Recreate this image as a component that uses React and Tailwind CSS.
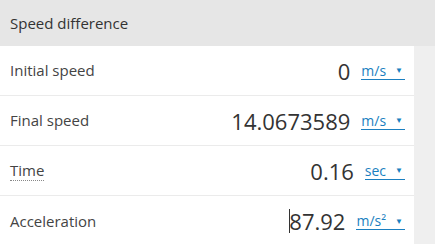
import React from 'react';

const rows = [
    { label: 'Initial speed', value: '0', unit: 'm/s' },
    { label: 'Final speed', value: '14.0673589', unit: 'm/s' },
    { label: 'Time', value: '0.16', unit: 'sec', dotted: true },
    { label: 'Acceleration', value: '87.92', unit: 'm/s²', caret: true },
];

const UnitLink = ({ unit }) => (
    <span className="flex items-center gap-[9px] border-b border-[#1a7fc0] text-[14px] leading-[17px] text-[#1a7fc0] pr-[2px]">
        <span>{unit}</span>
        <span className="text-[8px] leading-none">▼</span>
    </span>
);

export default function App() {
    return (
        <div className="w-[435px] h-[244px] overflow-hidden bg-[#efefef] font-['Open_Sans',sans-serif]">
            <div className="h-[46px] bg-[#e6e6e6] flex items-center px-[10px] text-[15px] text-[#333]">
                Speed difference
            </div>
            <div className="w-[414px] bg-white">
                {rows.map((row, i) => (
                    <div
                        key={row.label}
                        className={`h-[50px] flex items-center pl-[10px] pr-[9px] ${i < rows.length - 1 ? 'border-b border-[#ebebeb]' : ''}`}
                    >
                        <span
                            className={`text-[15px] text-[#444] ${row.dotted ? 'border-b border-dotted border-[#888] leading-[19px]' : ''}`}
                        >
                            {row.label}
                        </span>
                        <div className="ml-auto flex items-center gap-[11px]">
                            <span className="flex items-center text-[22px] text-[#333] leading-none">
                                {row.caret && <span className="w-px h-[24px] bg-[#333] mr-[-1px]"></span>}
                                {row.value}
                            </span>
                            <UnitLink unit={row.unit} />
                        </div>
                    </div>
                ))}
            </div>
        </div>
    );
}
